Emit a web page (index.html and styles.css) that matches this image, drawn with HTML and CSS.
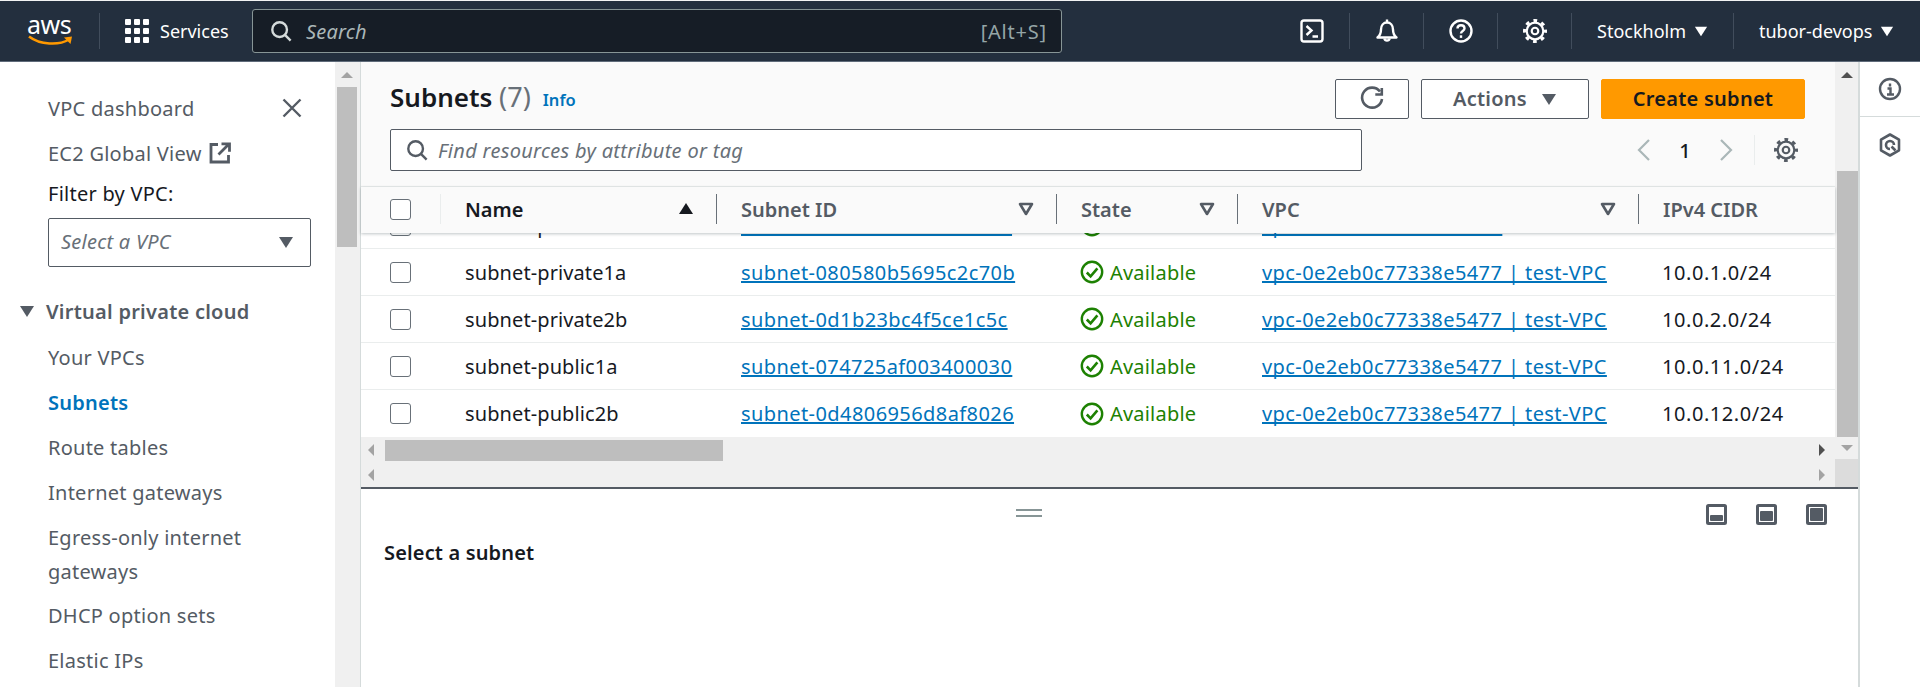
FILE: index.html
```html
<!DOCTYPE html>
<html lang="en">
<head>
    <meta charset="UTF-8">
    <title>Subnets | VPC Console</title>
    <link rel="stylesheet" href="styles.css">
</head>
<body>
    <svg class="defs" width="0" height="0">
        <symbol id="gear" viewBox="1 1 22 22">
            <circle cx="12" cy="12" r="7.6" fill="none" stroke="currentColor" stroke-width="2"/>
            <circle cx="12" cy="12" r="9.6" fill="none" stroke="currentColor" stroke-width="2.8" stroke-dasharray="3.4 4.14" stroke-dashoffset="1.7"/>
            <circle cx="12" cy="12" r="3" fill="none" stroke="currentColor" stroke-width="2"/>
        </symbol>
        <symbol id="search" viewBox="0 0 24 24">
            <circle cx="10.5" cy="10.5" r="8" fill="none" stroke="currentColor" stroke-width="2.6"/>
            <path d="M16 16l6.5 6.5" fill="none" stroke="currentColor" stroke-width="2.6"/>
        </symbol>
        <symbol id="caret" viewBox="0 0 16 16">
            <path d="M1 3h14L8 14z" fill="currentColor"/>
        </symbol>
        <symbol id="caret-up" viewBox="0 0 16 16">
            <path d="M1 13h14L8 2z" fill="currentColor"/>
        </symbol>
        <symbol id="filter-caret" viewBox="0 0 16 16">
            <path d="M2 3h12L8 13z" fill="none" stroke="currentColor" stroke-width="2.6" stroke-linejoin="round"/>
        </symbol>
        <symbol id="check" viewBox="0 0 24 24">
            <circle cx="12" cy="12" r="10.2" fill="none" stroke="currentColor" stroke-width="2.4"/>
            <path d="M6.800 12.500l3.800 3.800L17.400 8.400" fill="none" stroke="currentColor" stroke-width="2.600"/>
        </symbol>
    </svg>

    <header class="topbar">
        <div class="logo">
            <span class="logo-text">aws</span>
            <svg class="logo-smile" viewBox="0 0 46 12"><path d="M1 1.5C12 10 31 10.500 41 4.500" fill="none" stroke="#ff9900" stroke-width="2.600"/><path d="M36 2.500l8-1-1.500 7.500" fill="#ff9900"/></svg>
        </div>
        <div class="services">
            <svg class="grid-icon" viewBox="0 0 24 24" fill="#fff">
                <rect width="6" height="6" rx="1"/><rect x="9" width="6" height="6" rx="1"/><rect x="18" width="6" height="6" rx="1"/>
                <rect y="9" width="6" height="6" rx="1"/><rect x="9" y="9" width="6" height="6" rx="1"/><rect x="18" y="9" width="6" height="6" rx="1"/>
                <rect y="18" width="6" height="6" rx="1"/><rect x="9" y="18" width="6" height="6" rx="1"/><rect x="18" y="18" width="6" height="6" rx="1"/>
            </svg>
            <span>Services</span>
        </div>
        <div class="global-search">
            <svg class="icon-22"><use href="#search"/></svg>
            <span class="global-search-text">Search</span>
            <span class="shortcut">[Alt+S]</span>
        </div>
        <div class="top-icons">
            <div class="top-icon top-icon-first">
                <svg class="icon-24" viewBox="0 0 24 24" fill="none" stroke="#fff" stroke-width="2.400"><rect x="1.500" y="1.500" width="21" height="21" rx="2.500"/><path d="M6.500 7l5 4.500-5 4.500M12.500 17.500h5.500"/></svg>
            </div>
            <div class="top-icon">
                <svg class="icon-24" viewBox="0 0 24 24" fill="none" stroke="#fff" stroke-width="2.400"><path d="M2.500 18.500c3-2.500 3.500-4.500 3.500-8 0-4 2.500-7 6-7s6 3 6 7c0 3.500.5 5.500 3.500 8z" stroke-linejoin="round"/><path d="M12 .5v3M9.300 19.500a2.800 2.800 0 0 0 5.400 0"/></svg>
            </div>
            <div class="top-icon">
                <svg class="icon-24" viewBox="0 0 24 24" fill="none" stroke="#fff" stroke-width="2.400"><circle cx="12" cy="12" r="10.500"/><path d="M8.500 9.500c0-2 1.500-3.300 3.500-3.300s3.500 1.300 3.500 3.200c0 2.600-3.500 2.700-3.500 5.100"/><path d="M12 16.300v2.600"/></svg>
            </div>
            <div class="top-icon top-icon-gear">
                <svg class="icon-24"><use href="#gear"/></svg>
            </div>
        </div>
        <div class="top-menu top-menu-region">Stockholm <svg class="icon-14"><use href="#caret"/></svg></div>
        <div class="top-menu top-menu-user">tubor-devops <svg class="icon-14"><use href="#caret"/></svg></div>
    </header>

    <div class="main">
        <nav class="sidebar">
            <div class="nav-head">
                <a class="nav-link">VPC dashboard</a>
                <svg class="close-icon" viewBox="0 0 20 20" fill="none" stroke="#545b64" stroke-width="2.400"><path d="M1.500 1.500l17 17M18.500 1.500l-17 17"/></svg>
            </div>
            <a class="nav-link nav-external">EC2 Global View
                <svg class="icon-22" viewBox="0 0 22 22" fill="none" stroke="#545b64" stroke-width="2.800"><path d="M9 2.500H2v17.500h17.500v-7"/><path d="M9.500 12.500L19.500 2.500M12.500 1.800h8v8"/></svg>
            </a>
            <div class="filter-label">Filter by VPC:</div>
            <div class="vpc-select">
                <span>Select a VPC</span>
                <svg class="icon-16"><use href="#caret"/></svg>
            </div>
            <div class="nav-section">
                <svg class="icon-16"><use href="#caret"/></svg>
                <span>Virtual private cloud</span>
            </div>
            <ul class="nav-list">
                <li>Your VPCs</li>
                <li class="nav-active">Subnets</li>
                <li>Route tables</li>
                <li>Internet gateways</li>
                <li class="nav-wrap">Egress-only internet<br>gateways</li>
                <li>DHCP option sets</li>
                <li>Elastic IPs</li>
            </ul>
        </nav>

        <div class="side-scroll">
            <span class="arrow arrow-up arrow-dim"></span>
            <div class="side-thumb"></div>
        </div>

        <div class="content">
            <div class="table-pane">
                <div class="table-area">
                    <div class="table-top">
                        <div class="title-row">
                            <h1>Subnets <span class="count">(7)</span></h1>
                            <a class="info-link">Info</a>
                            <div class="actions">
                                <button class="btn btn-refresh">
                                    <svg class="icon-26" viewBox="0 0 26 26" fill="none" stroke="#545b64" stroke-width="2.600"><path d="M21 5.500A10 10 0 1 0 23 13"/><path d="M22.800 2v6.500h-6.500"/></svg>
                                </button>
                                <button class="btn btn-actions">Actions <svg class="icon-16"><use href="#caret"/></svg></button>
                                <button class="btn btn-primary">Create subnet</button>
                            </div>
                        </div>
                        <div class="filter-row">
                            <div class="filter-input">
                                <svg class="icon-22"><use href="#search"/></svg>
                                <span>Find resources by attribute or tag</span>
                            </div>
                            <div class="pager">
                                <svg class="pager-arrow" viewBox="0 0 16 24" fill="none" stroke="#aab7b8" stroke-width="2.200"><path d="M13 2L3 12l10 10"/></svg>
                                <span class="pager-num">1</span>
                                <svg class="pager-arrow" viewBox="0 0 16 24" fill="none" stroke="#aab7b8" stroke-width="2.200"><path d="M3 2l10 10L3 22"/></svg>
                                <div class="pager-settings"><svg class="icon-24"><use href="#gear"/></svg></div>
                            </div>
                        </div>
                    </div>

                    <div class="table-head">
                        <div class="cell cell-check"><span class="checkbox"></span></div>
                        <div class="cell cell-name">Name <svg class="sort-icon"><use href="#caret-up"/></svg></div>
                        <div class="cell">Subnet ID <svg class="sort-icon sort-open"><use href="#filter-caret"/></svg></div>
                        <div class="cell">State <svg class="sort-icon sort-open"><use href="#filter-caret"/></svg></div>
                        <div class="cell">VPC <svg class="sort-icon sort-open"><use href="#filter-caret"/></svg></div>
                        <div class="cell">IPv4 CIDR</div>
                    </div>

                    <div class="table-body">
                        <div class="row row-clipped">
                            <div class="cell cell-check"><span class="checkbox"></span></div>
                            <div class="cell">subnet-private1b</div>
                            <div class="cell"><a class="link">subnet-0a5c21be1f4d80911</a></div>
                            <div class="cell status"><svg class="icon-24"><use href="#check"/></svg>Available</div>
                            <div class="cell"><a class="link">vpc-0e2eb0c77338e5477</a></div>
                            <div class="cell cidr">10.0.3.0/24</div>
                        </div>
                        <div class="row">
                            <div class="cell cell-check"><span class="checkbox"></span></div>
                            <div class="cell">subnet-private1a</div>
                            <div class="cell"><a class="link">subnet-080580b5695c2c70b</a></div>
                            <div class="cell status"><svg class="icon-24"><use href="#check"/></svg>Available</div>
                            <div class="cell"><a class="link">vpc-0e2eb0c77338e5477 | test-VPC</a></div>
                            <div class="cell cidr">10.0.1.0/24</div>
                        </div>
                        <div class="row">
                            <div class="cell cell-check"><span class="checkbox"></span></div>
                            <div class="cell">subnet-private2b</div>
                            <div class="cell"><a class="link">subnet-0d1b23bc4f5ce1c5c</a></div>
                            <div class="cell status"><svg class="icon-24"><use href="#check"/></svg>Available</div>
                            <div class="cell"><a class="link">vpc-0e2eb0c77338e5477 | test-VPC</a></div>
                            <div class="cell cidr">10.0.2.0/24</div>
                        </div>
                        <div class="row">
                            <div class="cell cell-check"><span class="checkbox"></span></div>
                            <div class="cell">subnet-public1a</div>
                            <div class="cell"><a class="link">subnet-074725af003400030</a></div>
                            <div class="cell status"><svg class="icon-24"><use href="#check"/></svg>Available</div>
                            <div class="cell"><a class="link">vpc-0e2eb0c77338e5477 | test-VPC</a></div>
                            <div class="cell cidr">10.0.11.0/24</div>
                        </div>
                        <div class="row row-last">
                            <div class="cell cell-check"><span class="checkbox"></span></div>
                            <div class="cell">subnet-public2b</div>
                            <div class="cell"><a class="link">subnet-0d4806956d8af8026</a></div>
                            <div class="cell status"><svg class="icon-24"><use href="#check"/></svg>Available</div>
                            <div class="cell"><a class="link">vpc-0e2eb0c77338e5477 | test-VPC</a></div>
                            <div class="cell cidr">10.0.12.0/24</div>
                        </div>
                    </div>

                    <div class="hscroll hscroll-thumbed">
                        <span class="arrow arrow-left arrow-dim"></span>
                        <div class="hscroll-thumb"></div>
                        <span class="arrow arrow-right"></span>
                    </div>
                    <div class="hscroll">
                        <span class="arrow arrow-left arrow-dim"></span>
                        <span class="arrow arrow-right arrow-dim"></span>
                    </div>
                </div>

                <div class="vscroll">
                    <span class="arrow arrow-up"></span>
                    <div class="vscroll-thumb"></div>
                    <span class="arrow arrow-down arrow-dim"></span>
                    <div class="vscroll-corner"></div>
                </div>
            </div>

            <section class="split-panel">
                <div class="split-handle"></div>
                <div class="split-icons">
                    <svg class="split-icon" viewBox="0 0 21 21"><rect x="1.500" y="1.500" width="18" height="18" rx="1" fill="none" stroke="#545b64" stroke-width="3"/><rect x="4" y="11" width="13" height="6" rx="1" fill="#545b64"/></svg>
                    <svg class="split-icon" viewBox="0 0 21 21"><rect x="1.500" y="1.500" width="18" height="18" rx="1" fill="none" stroke="#545b64" stroke-width="3"/><rect x="4" y="7" width="13" height="10" rx="1" fill="#545b64"/></svg>
                    <svg class="split-icon" viewBox="0 0 21 21"><rect x="1.500" y="1.500" width="18" height="18" rx="1" fill="none" stroke="#545b64" stroke-width="3"/><rect x="4" y="4" width="13" height="13" rx="1" fill="#545b64"/></svg>
                </div>
                <h2>Select a subnet</h2>
            </section>
        </div>

        <aside class="tools">
            <div class="tool tool-info">
                <svg class="icon-24" viewBox="0 0 24 24" fill="none" stroke="#545b64" stroke-width="2.400"><circle cx="12" cy="12" r="10"/><path d="M12 6.500v3M9.500 11.500H12.500V17M9 17.500h7"/></svg>
            </div>
            <div class="tool">
                <svg class="icon-24" viewBox="0 0 24 24" fill="none" stroke="#545b64" stroke-width="2.600"><path d="M12 1.500l9 5.200v10.600l-9 5.200-9-5.200V6.700z" stroke-linejoin="round"/><path d="M16 12a4 4 0 1 0-4 4M13.500 13.500l4 4"/></svg>
            </div>
        </aside>
    </div>
</body>
</html>
```

FILE: styles.css
```css
* {
    box-sizing: border-box;
}

html, body {
    margin: 0;
    height: 100%;
    overflow: hidden;
}

body {
    display: flex;
    flex-direction: column;
    font-family: "Noto Sans", "Liberation Sans", sans-serif;
    font-size: 20px;
    color: #16191f;
    background: #fff;
}

.defs {
    position: absolute;
}

.icon-14 { width: 14px; height: 14px; }
.icon-16 { width: 16px; height: 16px; }
.icon-20 { width: 20px; height: 20px; }
.icon-22 { width: 22px; height: 22px; }
.icon-24 { width: 24px; height: 24px; }
.icon-26 { width: 26px; height: 26px; }

/* Top navigation */
.topbar {
    flex: none;
    height: 62px;
    display: flex;
    align-items: center;
    font-size: 18px;
    color: #fff;
    background: #232f3e;
    border-top: 1px solid #f2f3f3;
    border-bottom: 1px solid #5f6b7a;
}

.logo {
    width: 100px;
    height: 36px;
    padding-left: 27px;
    display: flex;
    flex-direction: column;
    border-right: 1px solid #414d5c;
}

.logo-text {
    font-size: 25px;
    line-height: 22px;
    letter-spacing: -0.5px;
}

.logo-smile {
    width: 48px;
    height: 12px;
}

.services {
    width: 152px;
    padding-left: 25px;
    display: flex;
    align-items: center;
    gap: 11px;
}

.grid-icon {
    width: 24px;
    height: 24px;
}

.global-search {
    width: 810px;
    height: 44px;
    padding: 0 14px 0 17px;
    display: flex;
    align-items: center;
    gap: 14px;
    font-size: 20px;
    color: #d5dbdb;
    background: #161d26;
    border: 1px solid #879596;
    border-radius: 3px;
}

.global-search-text {
    flex: 1;
    font-style: italic;
    letter-spacing: 0.2px;
    color: #aab7b8;
}

.shortcut {
    color: #95a5a6;
    letter-spacing: 0.8px;
}

.top-icons {
    margin-left: auto;
    display: flex;
    align-items: center;
}

.top-icon {
    width: 74px;
    height: 36px;
    display: flex;
    align-items: center;
    justify-content: center;
    border-right: 1px solid #414d5c;
}

.top-icon-first {
    width: 63px;
    justify-content: flex-start;
    padding-left: 13px;
}

.top-menu {
    height: 36px;
    display: flex;
    align-items: center;
    gap: 8px;
}

.top-menu-region {
    width: 162px;
    padding-left: 25px;
    border-right: 1px solid #414d5c;
}

.top-menu-user {
    width: 186px;
    padding-left: 25px;
}

/* Layout below the bar */
.main {
    flex: 1;
    min-height: 0;
    display: flex;
}

/* Side navigation */
.sidebar {
    flex: none;
    width: 335px;
    padding: 25px 24px 0 48px;
    letter-spacing: 0.25px;
    color: #545b64;
    overflow: hidden;
}

.nav-head {
    display: flex;
    align-items: center;
    justify-content: space-between;
    height: 42px;
    padding-right: 9px;
}

.close-icon {
    width: 20px;
    height: 20px;
}

.nav-external {
    height: 48px;
    display: flex;
    align-items: center;
    gap: 7px;
}

.filter-label {
    height: 36px;
    line-height: 34px;
    color: #16191f;
}

.vpc-select {
    height: 49px;
    margin-top: 5px;
    padding: 0 16px 2px 12px;
    display: flex;
    align-items: center;
    justify-content: space-between;
    font-style: italic;
    color: #687078;
    border: 1px solid #545b64;
    border-radius: 2px;
}

.vpc-select svg {
    color: #545b64;
}

.nav-section {
    margin: 23px 0 0 -29px;
    height: 42px;
    display: flex;
    align-items: center;
    gap: 11px;
    font-weight: 600;
}

.nav-list {
    list-style: none;
    margin: 4px 0 0;
    padding: 0;
}

.nav-list li {
    padding: 5px 0 6px;
    line-height: 34px;
}

.nav-list .nav-wrap {
    line-height: 33.5px;
}

.nav-active {
    font-weight: 600;
    color: #0073bb;
}

/* Fake browser scrollbars */
.side-scroll {
    flex: none;
    width: 26px;
    padding: 0 3px 0 2px;
    background: #f0f0f0;
    border-right: 1px solid #d5dbdb;
}

.side-thumb {
    height: 160px;
    margin-top: 9px;
    background: #bebebe;
}

.arrow {
    display: block;
    width: 0;
    height: 0;
    border-style: solid;
    border-color: transparent;
}

.arrow-up {
    margin: 10px auto 0;
    border-width: 0 6px 6px;
    border-bottom-color: #505050;
}

.arrow-down {
    margin: 8px auto 0;
    border-width: 6px 6px 0;
    border-top-color: #505050;
}

.arrow-left {
    border-width: 6px 6px 6px 0;
    border-right-color: #505050;
}

.arrow-right {
    margin-left: auto;
    border-width: 6px 0 6px 6px;
    border-left-color: #505050;
}

.side-scroll .arrow-up.arrow-dim {
    border-bottom-color: #a3a3a3;
}

.arrow-dim.arrow-left { border-right-color: #a3a3a3; }
.arrow-dim.arrow-right { border-left-color: #a3a3a3; }
.arrow-dim.arrow-down { border-top-color: #a3a3a3; }

/* Main content */
.content {
    flex: none;
    width: 1499px;
    display: flex;
    flex-direction: column;
    border-right: 2px solid #d5dbdb;
}

.table-pane {
    flex: none;
    height: 425px;
    display: flex;
}

.table-area {
    flex: 1;
    min-width: 0;
    display: flex;
    flex-direction: column;
}

.table-top {
    flex: none;
    height: 125px;
    padding: 17px 30px 0 29px;
    background: #fafafa;
    border-bottom: 1px solid #eaeded;
}

.title-row {
    height: 40px;
    display: flex;
    align-items: center;
}

h1 {
    margin: -6px 0 0;
    font-size: 26px;
    font-weight: 600;
}

.count {
    font-size: 27px;
    font-weight: 400;
    color: #687078;
}

.info-link {
    margin: 0 0 0 12px;
    font-size: 16.5px;
    font-weight: 600;
    color: #0073bb;
}

.actions {
    margin-left: auto;
    display: flex;
    gap: 12px;
}

.btn {
    height: 40px;
    padding-bottom: 2px;
    font: inherit;
    font-weight: 600;
    letter-spacing: 0.25px;
    display: flex;
    align-items: center;
    justify-content: center;
    gap: 14px;
    color: #545b64;
    background: #fff;
    border: 1px solid #545b64;
    border-radius: 2px;
}

.btn-refresh { width: 74px; }
.btn-actions { width: 168px; }

.btn-primary {
    width: 204px;
    color: #16191f;
    background: #ff9900;
    border-color: #ff9900;
}

.filter-row {
    margin-top: 10px;
    display: flex;
    align-items: center;
}

.filter-input {
    width: 972px;
    height: 42px;
    padding: 0 15px;
    display: flex;
    align-items: center;
    gap: 10px;
    font-style: italic;
    letter-spacing: 0.3px;
    color: #687078;
    background: #fff;
    border: 1px solid #545b64;
    border-radius: 2px;
}

.filter-input svg {
    color: #545b64;
}

.pager {
    margin-left: 274px;
    display: flex;
    align-items: center;
    color: #545b64;
}

.pager-arrow {
    width: 16px;
    height: 24px;
}

.pager-num {
    width: 66px;
    text-align: center;
    font-weight: 500;
    color: #16191f;
}

.pager-settings {
    margin-left: 20px;
    padding-left: 19px;
    height: 30px;
    display: flex;
    align-items: center;
    border-left: 1px solid #eaeded;
}

.table-head,
.row {
    display: grid;
    grid-template-columns: 79px 276px 340px 181px 401px 1fr;
    align-items: center;
}

.table-head {
    position: relative;
    z-index: 1;
    flex: none;
    height: 46px;
    padding-bottom: 2px;
    font-weight: 600;
    color: #545b64;
    background: #fafafa;
    box-shadow: 0 1px 3px rgba(0, 28, 36, 0.25);
}

.table-head .cell {
    height: 30px;
    display: flex;
    align-items: center;
    justify-content: space-between;
    padding-left: 24px;
    padding-right: 22px;
    border-left: 1px solid #687078;
}

.table-head .cell-check {
    padding-left: 29px;
    border-left: 0;
}

.table-head .cell-name {
    color: #16191f;
    border-left-color: #eaeded;
}

.cell {
    padding-left: 25px;
    white-space: nowrap;
}

.cell-check {
    padding-left: 29px;
}

.checkbox {
    display: block;
    width: 21px;
    height: 21px;
    background: #fff;
    border: 1px solid #687078;
    border-radius: 3px;
}

.sort-icon {
    width: 16px;
    height: 16px;
}

.sort-open {
    color: #545b64;
}

.table-body {
    flex: none;
    height: 204px;
    overflow: hidden;
    letter-spacing: 0.1px;
    background: #fff;
}

.row {
    height: 47px;
    border-bottom: 1px solid #eaeded;
}

.row-clipped {
    margin-top: -31px;
}

.row-last {
    border-bottom: 0;
}

.link {
    letter-spacing: 0.42px;
    color: #0073bb;
    text-decoration: underline;
    text-decoration-thickness: 2px;
    text-decoration-skip-ink: none;
}

.cidr {
    padding-left: 24px;
    letter-spacing: 0.55px;
}

.status {
    display: flex;
    align-items: center;
    gap: 6px;
    padding-left: 24px;
    letter-spacing: 0.2px;
    color: #1d8102;
}

.hscroll {
    flex: none;
    height: 24px;
    display: flex;
    align-items: center;
    padding: 0 10px 0 7px;
    background: #f0f0f0;
}

.hscroll-thumbed {
    height: 26px;
}

.hscroll-thumb {
    width: 338px;
    height: 21px;
    margin-left: 11px;
    background: #bebebe;
}

.vscroll {
    flex: none;
    width: 23px;
    display: flex;
    flex-direction: column;
    background: #f0f0f0;
}

.vscroll-thumb {
    height: 266px;
    margin: 93px 0 0 2px;
    background: #bebebe;
}

.vscroll-corner {
    flex: 1;
    margin-top: 8px;
    background: #dcdcdc;
}

/* Split panel */
.split-panel {
    flex: 1;
    position: relative;
    border-top: 2px solid #545b64;
}

.split-handle {
    width: 26px;
    height: 8px;
    margin: 20px 0 0 655px;
    border-top: 2px solid #879596;
    border-bottom: 2px solid #879596;
}

.split-icons {
    position: absolute;
    top: 15px;
    right: 31px;
    display: flex;
    gap: 29px;
}

.split-icon {
    width: 21px;
    height: 21px;
}

h2 {
    margin: 22px 0 0 23px;
    font-size: 20px;
    font-weight: 600;
    letter-spacing: 0.15px;
}

/* Right tool rail */
.tools {
    flex: 1;
    color: #545b64;
}

.tool {
    height: 55px;
    display: flex;
    align-items: center;
    justify-content: center;
}

.tool-info {
    border-bottom: 1px solid #d5dbdb;
}
```
